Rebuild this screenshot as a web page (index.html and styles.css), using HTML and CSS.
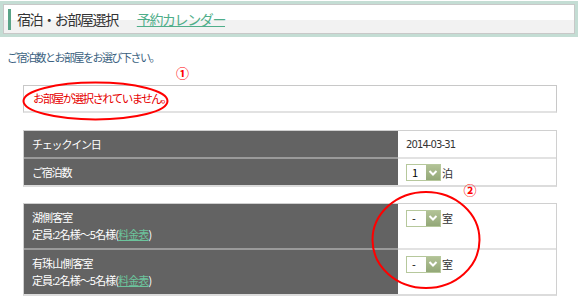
FILE: index.html
```html
<!DOCTYPE html>
<html lang="ja">
<head>
  <meta charset="UTF-8" />
  <title>宿泊・お部屋選択</title>
  <link rel="stylesheet" href="styles.css">
</head>
<body>
  <div class="page-head">
    <div class="page-head-inner">
      <span class="bar"></span>
      <span class="title">宿泊・お部屋選択</span>
      <a class="cal-link" href="#">予約カレンダー</a>
    </div>
  </div>

  <p class="intro">ご宿泊数とお部屋をお選び下さい。</p>

  <div class="msg-box">お部屋が選択されていません。</div>

  <table class="form-table">
    <tr>
      <td class="label">チェックイン日</td>
      <td class="value date">2014-03-31</td>
    </tr>
    <tr class="sep">
      <td class="label">ご宿泊数</td>
      <td class="value">
        <span class="sel"><span class="sel-val">1</span><span class="sel-btn"><svg width="10" height="8" viewBox="0 0 10 8"><path d="M1.5 2 L5 5.5 L8.5 2" fill="none" stroke="#fff" stroke-width="2"/></svg></span></span><span class="unit">泊</span>
      </td>
    </tr>
  </table>

  <table class="form-table rooms">
    <tr>
      <td class="label">
        <div>湖側客室</div>
        <div class="cap">定員:2名様〜5名様(<a href="#">料金表</a>)</div>
      </td>
      <td class="value">
        <span class="sel"><span class="sel-val">-</span><span class="sel-btn"><svg width="10" height="8" viewBox="0 0 10 8"><path d="M1.5 2 L5 5.5 L8.5 2" fill="none" stroke="#fff" stroke-width="2"/></svg></span></span><span class="unit">室</span>
      </td>
    </tr>
    <tr class="sep">
      <td class="label">
        <div>有珠山側客室</div>
        <div class="cap">定員:2名様〜5名様(<a href="#">料金表</a>)</div>
      </td>
      <td class="value">
        <span class="sel"><span class="sel-val">-</span><span class="sel-btn"><svg width="10" height="8" viewBox="0 0 10 8"><path d="M1.5 2 L5 5.5 L8.5 2" fill="none" stroke="#fff" stroke-width="2"/></svg></span></span><span class="unit">室</span>
      </td>
    </tr>
  </table>

  <!-- red annotation marks drawn over the page -->
  <svg class="marks" width="581" height="299" viewBox="0 0 581 299">
    <ellipse cx="95.5" cy="101" rx="72" ry="18.5" fill="none" stroke="#f00" stroke-width="2"/>
    <ellipse cx="426" cy="240" rx="53.5" ry="48" fill="none" stroke="#f00" stroke-width="2"/>
    <text x="182.5" y="78" class="num">①</text>
    <text x="470" y="195" class="num">②</text>
  </svg>
</body>
</html>
```

FILE: styles.css
```css
body {
  margin: 0;
  width: 581px;
  height: 299px;
  position: relative;
  background: #fff;
  font-family: "Noto Sans CJK JP", "DejaVu Sans", sans-serif;
  font-size: 11px;
  color: #333;
  overflow: hidden;
}
.page-head {
  margin: 1px 3px 0 0;
  border: 3px solid #c4ddd4;
}
.page-head-inner {
  height: 28px;
  border: 1px solid #c8c8c8;
  background: linear-gradient(#fff 0, #fff 15px, #f2f2f2 15px);
  display: flex;
  align-items: center;
}
.bar {
  width: 3px;
  height: 21px;
  margin: 0 6px 0 4px;
  background: #5aa488;
}
.title {
  font-size: 14px;
  letter-spacing: -1.4px;
  color: #333;
}
.cal-link {
  margin-left: 19px;
  font-size: 14px;
  letter-spacing: -1.4px;
  color: #4fae8a;
}
.intro {
  margin: 12px 0 0 7px;
  height: 16px;
  line-height: 16px;
  letter-spacing: -1.5px;
  color: #3a5f80;
}
.msg-box {
  margin: 20px 0 0 23px;
  height: 25px;
  line-height: 25px;
  border: 1px solid #c8c8c8;
  border-bottom: 2px solid #e2e2e2;
  padding-left: 9px;
  width: 523px;
  color: #e60000;
  font-size: 11.5px;
  letter-spacing: -1.6px;
}
.form-table {
  margin: 17px 0 0 23px;
  width: 534px;
  border-collapse: separate;
  border-spacing: 0;
  border: 1px solid #d0d0d0;
  border-bottom: 2px solid #dcdcdc;
}
.form-table td {
  height: 26px;
  padding: 0 0 0 8px;
  vertical-align: middle;
}
.form-table .label {
  width: 366px;
  background: #636363;
  color: #fff;
  letter-spacing: -1.2px;
}
.form-table .value {
  background: #fff;
}
.form-table .sep .label {
  border-top: 2px solid #9a9a9a;
}
.form-table .sep .value {
  border-top: 2px solid #e2e2e2;
}
.date {
  font-family: "DejaVu Sans", sans-serif;
  font-size: 10px;
  letter-spacing: -0.9px;
}
.rooms {
  margin-top: 16px;
}
.rooms td {
  height: 39px;
  vertical-align: top;
}
.rooms .label {
  padding-top: 5px;
  line-height: 17px;
  letter-spacing: -0.9px;
}
.rooms .value {
  padding-top: 4px;
}
.cap a {
  color: #6cc49c;
}
.sel {
  display: inline-flex;
  vertical-align: middle;
  width: 33px;
  height: 15px;
  border: 1px solid #b6c89c;
  background: #fff;
  box-sizing: content-box;
}
.sel-val {
  flex: 1;
  padding-left: 5px;
  line-height: 15px;
  font-size: 11px;
  color: #000;
}
.sel-btn {
  width: 14px;
  height: 15px;
  background: linear-gradient(#b2c296, #93a878);
  display: flex;
  align-items: center;
  justify-content: center;
}
.unit {
  vertical-align: middle;
  margin-left: 1px;
}
.marks {
  position: absolute;
  top: 0;
  left: 0;
  pointer-events: none;
}
.num {
  fill: #f00;
  font-size: 13px;
  font-weight: bold;
  text-anchor: middle;
  font-family: "Noto Sans CJK JP", sans-serif;
}
```
